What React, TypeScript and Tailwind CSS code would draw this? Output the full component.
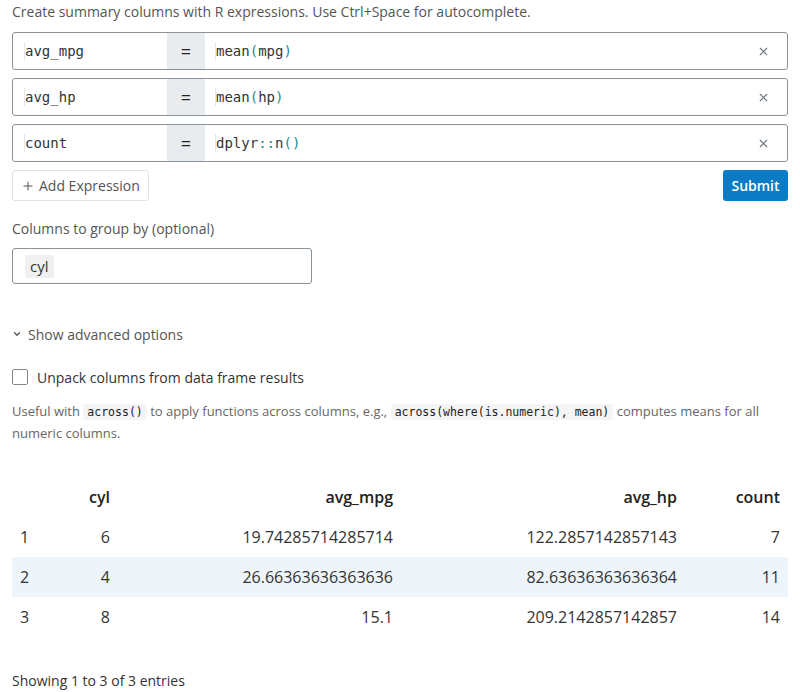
import { X, Plus, ChevronDown } from "lucide-react";

const exprs = [
  { name: "avg_mpg", fn: "mean", arg: "mpg", ns: "" },
  { name: "avg_hp", fn: "mean", arg: "hp", ns: "" },
  { name: "count", fn: "n", arg: "", ns: "dplyr" },
];

const rows = [
  ["1", "6", "19.74285714285714", "122.2857142857143", "7"],
  ["2", "4", "26.66363636363636", "82.63636363636364", "11"],
  ["3", "8", "15.1", "209.2142857142857", "14"],
];

const mono = "font-['DejaVu_Sans_Mono',monospace]";

function ExprRow({ name, fn, arg, ns }: { name: string; fn: string; arg: string; ns: string }) {
  return (
    <div className="flex h-[38px] border border-[#8a939c] rounded-[3px] overflow-hidden">
      <div className="w-[154px] flex items-center pl-[11px]">
        <span className="w-px h-[18px] bg-[#e6e6e6]" />
        <span className={`${mono} text-[14px] text-[#333]`}>{name}</span>
      </div>
      <div className="w-[38px] bg-[#e9ecef] flex items-center justify-center text-[18px] text-[#222]">=</div>
      <div className="flex-1 flex items-center pl-[10px]">
        <span className="w-px h-[18px] bg-[#e6e6e6]" />
        <span className={`${mono} text-[14px] text-[#333]`}>
          {ns && (
            <>
              {ns}
              <span className="text-[#1f8a8a]">::</span>
            </>
          )}
          {fn}
          <span className="text-[#1f8a8a]">(</span>
          {arg}
          <span className="text-[#1f8a8a]">)</span>
        </span>
      </div>
      <div className="w-[48px] flex items-center justify-center text-[#6c757d]">
        <X size={13} strokeWidth={2} />
      </div>
    </div>
  );
}

export default function App() {
  return (
    <div className="w-[800px] h-[692px] bg-white px-[12px] font-['Open_Sans',sans-serif] text-[#333] overflow-hidden">
      <p className="text-[14px] text-[#555] pt-[2px] h-[32px] leading-[20px]">
        Create summary columns with R expressions. Use Ctrl+Space for autocomplete.
      </p>

      <div className="flex flex-col gap-[8px]">
        {exprs.map((e) => (
          <ExprRow key={e.name} {...e} />
        ))}
      </div>

      <div className="flex justify-between mt-[8px]">
        <button className="h-[31px] px-[8px] border border-[#dee2e6] rounded-[3px] flex items-center gap-[4px] text-[14px] text-[#555]">
          <Plus size={14} strokeWidth={1.75} />
          Add Expression
        </button>
        <button className="h-[31px] w-[65px] bg-[#0a7bc4] rounded-[3px] text-white text-[14px] font-semibold">
          Submit
        </button>
      </div>

      <p className="text-[14px] text-[#555] mt-[18px] leading-[20px]">Columns to group by (optional)</p>
      <div className="mt-[9px] w-[300px] h-[36px] border border-[#8a939c] rounded-[3px] flex items-center pl-[12px]">
        <span className="bg-[#f0f0f0] rounded-[2px] px-[5px] h-[23px] flex items-center text-[15px] text-[#333]">cyl</span>
      </div>

      <div className="mt-[40px] flex items-center gap-[6px] text-[14px] text-[#555] h-[20px]">
        <ChevronDown size={10} strokeWidth={3} className="text-[#555]" />
        Show advanced options
      </div>

      <label className="mt-[23px] flex items-center gap-[9px] h-[20px]">
        <span className="w-[16px] h-[16px] border border-[#888] rounded-[2px] bg-white" />
        <span className="text-[14px] text-[#333]">Unpack columns from data frame results</span>
      </label>

      <p className="mt-[14px] text-[13px] leading-[21px] text-[#666]">
        Useful with{" "}
        <code className={`${mono} text-[11.5px] text-[#222] bg-[#f4f4f4] rounded-[3px] px-[4px] py-[1px]`}>across()</code>{" "}
        to apply functions across columns, e.g.,{" "}
        <code className={`${mono} text-[11.5px] text-[#222] bg-[#f4f4f4] rounded-[3px] px-[4px] py-[1px]`}>
          across(where(is.numeric), mean)
        </code>{" "}
        computes means for all numeric columns.
      </p>

      <div className="mt-[33px] text-[16px]">
        <div className="grid grid-cols-[58px_48px_283px_284px_103px] h-[40px] items-center font-semibold text-[#222]">
          <div />
          <div className="text-right pr-[8px]">cyl</div>
          <div className="text-right pr-[8px]">avg_mpg</div>
          <div className="text-right pr-[8px]">avg_hp</div>
          <div className="text-right pr-[8px]">count</div>
        </div>
        {rows.map((r, i) => (
          <div
            key={r[0]}
            className={`grid grid-cols-[58px_48px_283px_284px_103px] h-[40px] items-center text-[#333] ${i === 1 ? "bg-[#eef5fa]" : ""}`}
          >
            <div className="pl-[8px]">{r[0]}</div>
            <div className="text-right pr-[8px]">{r[1]}</div>
            <div className="text-right pr-[8px]">{r[2]}</div>
            <div className="text-right pr-[8px]">{r[3]}</div>
            <div className="text-right pr-[8px]">{r[4]}</div>
          </div>
        ))}
      </div>

      <p className="mt-[33px] text-[14px] text-[#333]">Showing 1 to 3 of 3 entries</p>
    </div>
  );
}
